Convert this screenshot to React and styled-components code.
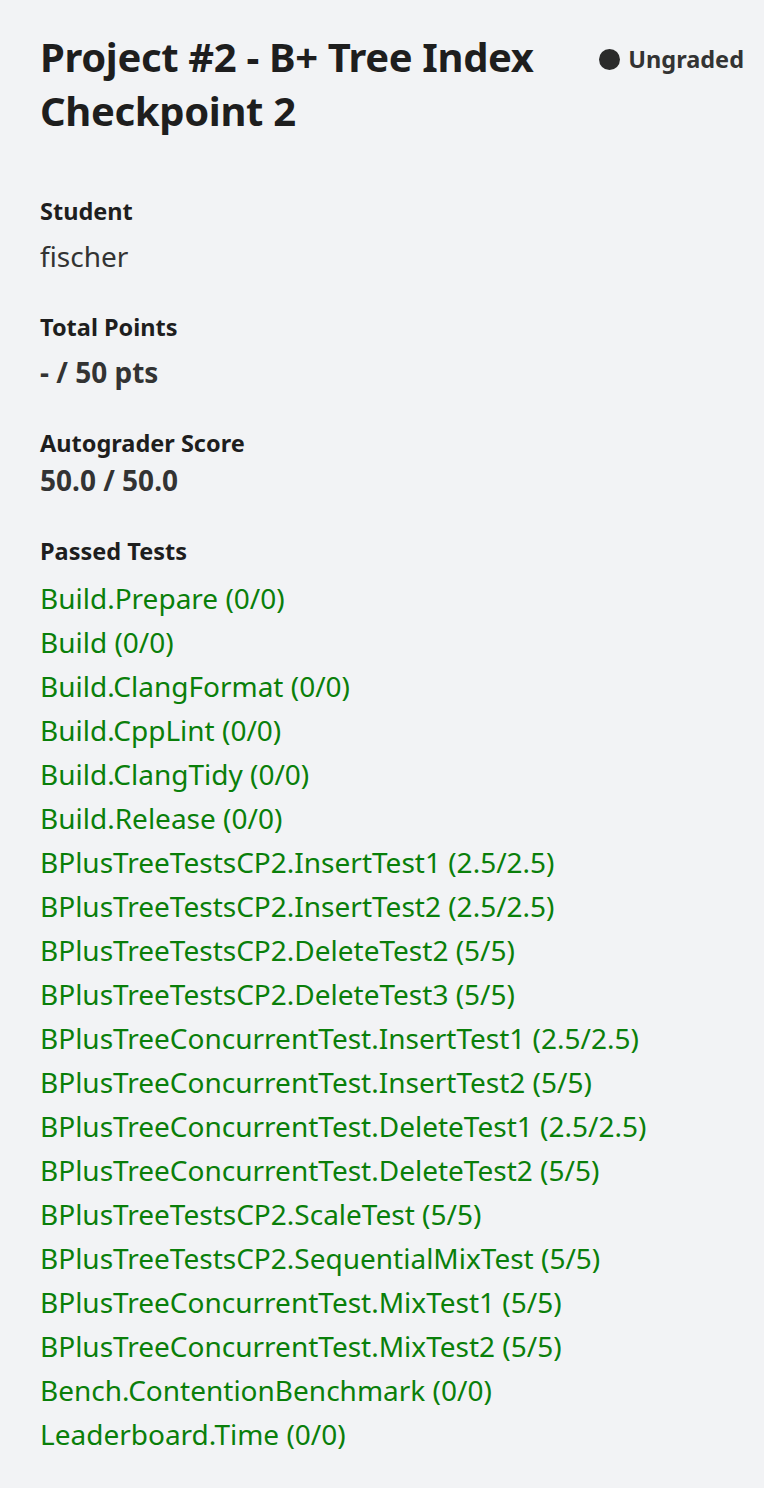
import React from "react";
import styled, { createGlobalStyle } from "styled-components";

const tests = [
  "Build.Prepare (0/0)",
  "Build (0/0)",
  "Build.ClangFormat (0/0)",
  "Build.CppLint (0/0)",
  "Build.ClangTidy (0/0)",
  "Build.Release (0/0)",
  "BPlusTreeTestsCP2.InsertTest1 (2.5/2.5)",
  "BPlusTreeTestsCP2.InsertTest2 (2.5/2.5)",
  "BPlusTreeTestsCP2.DeleteTest2 (5/5)",
  "BPlusTreeTestsCP2.DeleteTest3 (5/5)",
  "BPlusTreeConcurrentTest.InsertTest1 (2.5/2.5)",
  "BPlusTreeConcurrentTest.InsertTest2 (5/5)",
  "BPlusTreeConcurrentTest.DeleteTest1 (2.5/2.5)",
  "BPlusTreeConcurrentTest.DeleteTest2 (5/5)",
  "BPlusTreeTestsCP2.ScaleTest (5/5)",
  "BPlusTreeTestsCP2.SequentialMixTest (5/5)",
  "BPlusTreeConcurrentTest.MixTest1 (5/5)",
  "BPlusTreeConcurrentTest.MixTest2 (5/5)",
  "Bench.ContentionBenchmark (0/0)",
  "Leaderboard.Time (0/0)",
];

export default function App() {
  return (
    <>
      <GlobalStyle />
      <Page>
        <Header>
          <Title>Project #2 - B+ Tree Index Checkpoint 2</Title>
          <Status>
            <Dot />
            Ungraded
          </Status>
        </Header>

        <Field gap={15}>
          <Label>Student</Label>
          <Value>fischer</Value>
        </Field>

        <Field gap={15}>
          <Label>Total Points</Label>
          <Value bold>- / 50 pts</Value>
        </Field>

        <Field gap={7}>
          <Label>Autograder Score</Label>
          <Value bold>50.0 / 50.0</Value>
        </Field>

        <Field gap={10}>
          <Label>Passed Tests</Label>
          <TestList>
            {tests.map((t) => (
              <Test key={t}>{t}</Test>
            ))}
          </TestList>
        </Field>
      </Page>
    </>
  );
}

const GlobalStyle = createGlobalStyle`
  body {
    margin: 0;
    background: #f2f3f5;
    font-family: "Noto Sans", sans-serif;
    color: #212121;
  }
`;

const Page = styled.div`
  display: flex;
  flex-direction: column;
  gap: 41px;
  padding: 30px 20px 40px 40px;
  min-height: 1488px;
  box-sizing: border-box;
`;

const Header = styled.div`
  display: flex;
  justify-content: space-between;
  align-items: flex-start;
  margin-bottom: 17px;
`;

const Title = styled.h1`
  margin: 0;
  width: 540px;
  font-size: 40px;
  line-height: 54px;
  font-weight: 700;
  letter-spacing: -0.35px;
  color: #1e1e1e;
`;

const Status = styled.div`
  display: flex;
  align-items: center;
  gap: 8px;
  height: 58px;
  font-size: 23.5px;
  font-weight: 700;
  color: #333;
`;

const Dot = styled.span`
  width: 21px;
  height: 21px;
  border-radius: 50%;
  background: #2b2b2b;
`;

const Field = styled.div`
  display: flex;
  flex-direction: column;
  gap: ${(p) => p.gap}px;
`;

const Label = styled.div`
  font-size: 23.5px;
  font-weight: 700;
  line-height: 30px;
  color: #1e1e1e;
`;

const Value = styled.div`
  font-size: 28px;
  line-height: 30px;
  font-weight: ${(p) => (p.bold ? 700 : 400)};
  color: #333;
`;

const TestList = styled.div`
  display: flex;
  flex-direction: column;
`;

const Test = styled.div`
  font-size: 28px;
  line-height: 44px;
  color: #0a7f0a;
`;
